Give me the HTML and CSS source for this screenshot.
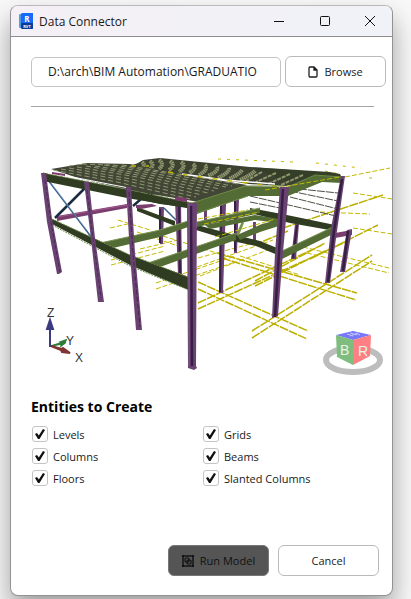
FILE: index.html
```html
<!DOCTYPE html>
<html lang="en">
<head>
<meta charset="utf-8">
<meta name="viewport" content="width=device-width, initial-scale=1">
<title>Data Connector</title>
<link rel="stylesheet" href="styles.css">
</head>
<body>
<main class="window">
  <header class="titlebar">
    <svg class="app-icon" width="15" height="17" viewBox="0 0 15 17" aria-hidden="true">
      <path d="M1 1h3v14H1a1 1 0 0 1-1-1V2a1 1 0 0 1 1-1z" fill="#4f9bea"/>
      <path d="M3 0h11v16H3l-1-1V1z" fill="#176bfa"/>
      <path d="M2 10h12v5l-1 1H3l-1-1z" fill="#0b3c96"/>
      <text x="8" y="9" text-anchor="middle" class="icon-letter">R</text>
      <text x="8" y="15" text-anchor="middle" class="icon-small">RVT</text>
    </svg>
    <h1 class="title">Data Connector</h1>
    <div class="controls">
      <button class="control" aria-label="Minimize"><svg width="10" height="10" viewBox="0 0 10 10"><path d="M0 5.500h10"/></svg></button>
      <button class="control" aria-label="Maximize"><svg width="10" height="10" viewBox="0 0 10 10"><rect x=".5" y=".5" width="9" height="9" rx="1"/></svg></button>
      <button class="control" aria-label="Close"><svg width="10" height="10" viewBox="0 0 10 10"><path d="M0 0l10 10M10 0L0 10"/></svg></button>
    </div>
  </header>

  <div class="content">
    <div class="file-row">
      <input class="path" type="text" aria-label="Model path" value="D:\arch\BIM Automation\GRADUATIO">
      <button class="button browse">
        <svg width="10" height="12" viewBox="0 0 10 12" aria-hidden="true"><path d="M1 2q0-1 1-1h4l3 3v6q0 1-1 1H2q-1 0-1-1zM6 1v3h3" fill="none" stroke="#1c1c1c" stroke-width="1.300"/><path d="M6 1l3 3H6z" fill="#1c1c1c"/></svg>
        Browse
      </button>
    </div>
    <hr class="rule">

    <svg class="model" viewBox="31 107 361 288" role="img" aria-label="Structural model">
      <!-- grid lines behind the frame -->
      <g class="grid-dashed">
        <path d="M345 177L390 168M353 193L392 199M353 228L392 234M303 247L389 268M307 253L389 273M320 212L370 214"/>
        <path d="M218 159L293 162M316 163L361 168M369 178H374M325 171L340 174" stroke-dasharray="3 6"/>
        <path d="M110 228L132 223M118 220L150 230M111 260L165 246M111 265L165 251M156 283L235 256M156 289L235 262M163 236L223 255M137 232L178 246M140 249L178 240M197 267L273 240M200 276L273 248M198 258L250 244M240 256L300 275"/>
      </g>
      <g class="grid-solid">
        <path d="M252 331L372 255M252 338L372 261M198 282L308 331M198 289L307 339M198 303L322 245M198 309L350 240M217 253L357 293M222 258L356 300M255 281L325 243M255 286L325 251"/>
        <path d="M283 228L383 195M310 259L378 225M254 245L288 231"/>
      </g>
      <g stroke="#4d5145" stroke-width="1" stroke-dasharray="8 1">
        <path d="M290 188L338 193M290 191L338 201M250 196L336 216M262 192L280 194M290 197L338 209M250 202L280 208"/>
      </g>

      <!-- rear columns -->
      <g fill="#6a4272">
        <path d="M159 207h5l-1 37h-3zM175 201h6l1 73h-4zM220 204h6l-3 89h-4zM235 199h4l-2 54h-3zM204 209h3v14h-3zM253 222h3v18h-3zM295 224h4l-3 35h-5z"/>
      </g>
      <path d="M160 209v34M179 203l1 70M221 206l-1 86M235 201v50M297 225l-4 33" stroke="#351f42" stroke-width="2"/>

      <!-- beams inside the frame -->
      <path d="M137 207l38 14v5l-38-15zM197 225l38 10 25 6 22 9-2 6-24-10-24-5-36-11zM250 208l32 6 53 11v6l-45-8-40-10z" fill="#303c21"/>
      <g fill="#536b34">
        <path d="M100 243l60-13 28-9v6l-28 10-47 11zM148 263l62-21 26-9v7l-26 9-50 18zM197 222l63-14v5l-63 14zM237 235l25-11 23-6v6l-25 8-20 8zM282 251l53-25v7l-53 26z"/>
        <path d="M242 221l-6 14h3l5-12z" fill="#78924e"/>
        <path d="M205 225l50-10 25 4v4l-25-3-45 9z"/>
      </g>
      <path d="M100 243l60-13 28-9M148 263l62-21 26-9M197 222l63-14M282 251l53-25" fill="none" stroke="#7b9453"/>
      <path d="M204 224l55-12M215 237l60-18M198 219l50-9" class="grid-dashed"/>
      <path d="M57 216l70-12v4l-70 13zM136 205l16-1 5 2-16 3-5-1zM335 233l17-3v5l-17 3z" fill="#7b3d6d"/>
      <path d="M57 217l70-12" stroke="#9f5a8d"/>

      <!-- bracing -->
      <path d="M55 218L85 188M133 206l8-7M147 193l6 1 2-2" fill="none" stroke="#1c2b41" stroke-width="2.500"/>
      <path d="M48 180L92 238M164 208l12 12" stroke="#3a628c" stroke-width="1.500"/>
      <path d="M51 183l35 46" stroke="#8ab0cf" stroke-width=".500"/>

      <!-- lower side beam -->
      <path d="M52 219l78 36 61 23v13l-61-26-78-41z" fill="#303c21"/>
      <path d="M52 219l78 36 61 23M52 225l78 41 61 25" fill="none" stroke="#6d8b47" stroke-dasharray="2 1"/>

      <!-- rear roof slope -->
      <path d="M130 166l8-3 5-3 17-2 90 9 80 5 10 2 2 4-27 2-29 6-37-2-24-4-95-10z" fill="#3c4130"/>
      <path d="M250 167l81 6 9 2v3l-28-2-23 6z" fill="#303c21" opacity=".600"/>
      <g fill="none" stroke="#8f9870" stroke-width="4" stroke-dasharray="1.500 .500">
        <path d="M142 162q4 3 0 6M150 161q5 4 0 8M159 160q6 4 0 9M170 161q6 4-1 9M181 162q6 4-2 10M193 164q5 4-4 9M205 165q4 4-6 10M217 167q2 4-9 9M229 168q1 4-11 10M242 170q-2 4-13 9M255 171q-4 4-15 9"/>
      </g>
      <path d="M262 172l-16 9M276 173l-20 9M290 174l-22 10M303 175l-22 10" stroke="#8f9870" stroke-width="2" stroke-dasharray="4 1"/>

      <!-- front roof slope -->
      <path d="M51 169l36-6 43 1 45 9 72 12-48 17-60-10-58-13z" fill="#424636"/>
      <g fill="none" stroke="#8f9870" stroke-width="1" stroke-dasharray="5 3">
        <path d="M53 170l64 12 73 17M61 169l62 11 73 17M69 168l62 11 71 16M77 167l60 10 71 16M86 166l57 10 71 15M95 166l55 9 70 14M104 165l53 9 69 13M113 165l51 8 68 13M122 165l50 8 66 11M69 166l16-2M82 164l28 1"/>
      </g>
      <path d="M182 174l43 6 50 4" stroke="#fff" stroke-width="1.500" fill="none"/>
      <path d="M168 172l12 2 43 6 15 2 45 5M131 166h18" fill="none" stroke="#c3b800" stroke-width="1.500" stroke-dasharray="5 10"/>

      <!-- eaves -->
      <path d="M43 173l87 17 62 13v5l-32-4-65-14-50-10z" fill="#303c21"/>
      <path d="M46 179l84 17 60 10" stroke="#303c21" stroke-width="5" fill="none"/>
      <path d="M43 173l87 17 62 13" fill="none" stroke="#687e43" stroke-dasharray="2 1"/>
      <path d="M52 172l13 2v2l-13-2zM176 197l11 1v4l-13-2z" fill="#7b3d6d"/>
      <path d="M67 176l62 12" stroke="#fff"/>
      <path d="M192 203l53-17 40 1v9h-37l-51 18zM288 187l27-12 27 2v6l-20-1-34 14z" fill="#536b34"/>
      <path d="M192 203l53-17h40M288 187l27-12 27 2M197 213l51-17" fill="none" stroke="#6d8948"/>
      <path d="M265 190l75-13" class="grid-dashed"/>

      <!-- front columns -->
      <g fill="#6a4272">
        <path d="M41 173h5l6 46 10 53-3 2h-2l-10-52zM84 182h5l6 56 9 64h-6l-7-63zM126 187h5l4 66 7 77h-6l-6-75zM187 203h10l-1 163 1 2-3 2-6-2zM280 187h9l-6 65-5 64-6 2 3-65zM341 176h4l-8 55-7 52h-5l6-55zM347 230l5-1-7 43h-5z"/>
      </g>
      <path d="M45 180l6 42 9 50M87 190l6 48 8 60" fill="none" stroke="#4b2d57" stroke-dasharray="4 2"/>
      <path d="M129 192l4 62 7 73" fill="none" stroke="#45284f" stroke-dasharray="5 2"/>
      <path d="M191 206l1 160M283 189l-4 64-4 64M342 179l-8 52-6 51M348 231l-5 40" fill="none" stroke="#351f42" stroke-width="2.500"/>
      <path d="M189 204v162" stroke="#815989"/>

      <!-- axis triad -->
      <path d="M50 347v-18h-3l3-9 3 9h-3" fill="#3b3b82" stroke="#3b3b82" stroke-width="2"/>
      <path d="M51 346l10-3-1-1 6-2-1 3-4 3v-2z" fill="#2d7d39" stroke="#2d7d39" stroke-width="1.500"/>
      <path d="M51 346l11 3 1-1 7 5-8-1-1-2z" fill="#803434" stroke="#803434" stroke-width="2"/>
      <g class="axis"><text x="47" y="317">Z</text><text x="66" y="345">Y</text><text x="75" y="362">X</text></g>

      <!-- view cube -->
      <ellipse cx="353" cy="360" rx="27" ry="12" fill="none" stroke="#bdbdbd" stroke-width="6"/>
      <path d="M336 335l17-4 18 4-18 5z" fill="#7777fa"/>
      <path d="M336 335l17 5v25l-16-8z" fill="#7fbd7f"/>
      <path d="M353 340l18-5-1 21-17 9z" fill="#ff7f82"/>
      <path d="M347 334l6 2M350 333l7 2M356 333l4 2M350 336l8-3" stroke="#c6c6ff"/>
      <g class="cube"><text x="340" y="355">B</text><text x="358" y="356">R</text></g>
    </svg>

    <fieldset class="entities">
      <legend class="heading">Entities to Create</legend>
      <div class="options">
        <label class="option"><input type="checkbox" checked>Levels</label>
        <label class="option"><input type="checkbox" checked>Grids</label>
        <label class="option"><input type="checkbox" checked>Columns</label>
        <label class="option"><input type="checkbox" checked>Beams</label>
        <label class="option"><input type="checkbox" checked>Floors</label>
        <label class="option"><input type="checkbox" checked>Slanted Columns</label>
      </div>
    </fieldset>

    <footer class="actions">
      <button class="button run">
        <svg width="12" height="12" viewBox="0 0 12 12" aria-hidden="true"><rect x="1" y="1" width="10" height="10" fill="none" stroke="#111" stroke-width="1.400"/><path d="M0 0h2v2H0zM10 0h2v2h-2zM0 10h2v2H0zM10 10h2v2h-2z" fill="#111"/><rect x="3" y="3" width="4" height="4" rx="1" fill="none" stroke="#111" stroke-width="1.200"/><rect x="5" y="5" width="4" height="4" rx="1" fill="none" stroke="#111" stroke-width="1.200"/></svg>
        Run Model
      </button>
      <button class="button">Cancel</button>
    </footer>
  </div>
</main>
</body>
</html>
```
FILE: styles.css
```css
* { box-sizing: border-box; }

body {
  display: flex;
  min-height: 100vh;
  margin: 0;
  padding: 5px 18px 3px 10px;
  background: #f8f8f8;
  font-family: "Open Sans", "Noto Sans", sans-serif;
  font-size: 12px;
  color: #1a1a1a;
  overflow: hidden;
}

button, input { font: inherit; color: inherit; }

.window {
  display: flex;
  flex: 1;
  flex-direction: column;
  min-width: 0;
  border: 1px solid #929294;
  border-top-color: #b9b9bb;
  border-radius: 8px;
  background: #fff;
  box-shadow: 0 14px 26px rgba(0, 0, 0, .36);
  overflow: hidden;
}

.titlebar {
  display: flex;
  align-items: center;
  height: 31px;
  padding-left: 8px;
  border-bottom: 1px solid #8d8d90;
  background: linear-gradient(90deg, #f4f0f5, #f0f2f8);
}

.app-icon { margin-right: 5px; }
.icon-letter { font-size: 8px; font-weight: 700; fill: #fff; }
.icon-small { font-size: 4px; font-weight: 700; fill: #fff; }
.title { flex: 1; margin: 0; font-size: 12px; font-weight: 400; }
.controls { display: flex; }

.control {
  display: grid;
  place-items: center;
  width: 46px;
  height: 30px;
  padding: 0;
  border: 0;
  background: none;
}
.control:last-child { width: 44px; }
.control svg { fill: none; stroke: #111; }

.content {
  display: flex;
  flex: 1;
  flex-direction: column;
  padding: 19px 6px 19px 20px;
}

.file-row { display: flex; align-items: center; gap: 4px; }

.path {
  flex: 1;
  min-width: 0;
  height: 30px;
  padding: 0 16px;
  border: 1px solid #c4c4c4;
  border-radius: 5px;
  background: #fff;
}

.button {
  display: flex;
  align-items: center;
  justify-content: center;
  gap: 6px;
  width: 101px;
  height: 31px;
  padding: 0;
  border: 1px solid #bababa;
  border-radius: 6px;
  background: #fff;
  font-size: 11px;
}

.rule {
  width: auto;
  height: 1px;
  margin: 19px 12px 0 0;
  border: 0;
  background: #a6a6a6;
}

.model { display: block; margin-right: -6px; }
.grid-dashed { fill: none; stroke: #c3b900; stroke-width: 1; stroke-dasharray: 5 2; }
.grid-solid { fill: none; stroke: #bbb000; stroke-width: 1.5; stroke-dasharray: 9 1; }
.axis { font: 12px "Liberation Sans", sans-serif; fill: #333; }
.cube { font: 14px "Liberation Sans", sans-serif; fill: #e9f3e9; }

.entities { min-width: 0; margin: 0; padding: 0; border: 0; }
.heading { padding: 0; font-size: 14px; font-weight: 700; line-height: 24px; color: #000; }
.options { display: grid; grid-template-columns: 171px 1fr; grid-auto-rows: 22px; margin-top: 4px; }
.option { display: flex; align-items: center; gap: 5px; padding-left: 1px; font-size: 11px; }

.option input {
  appearance: none;
  width: 16px;
  height: 16px;
  margin: 0;
  border: 1px solid #c4c4c4;
  border-radius: 3px;
  background: #fff;
}

.option input:checked::before {
  content: "";
  display: block;
  width: 10px;
  height: 10px;
  margin: 2px;
  background: #111;
  clip-path: polygon(0 50%, 20% 40%, 38% 65%, 80% 0, 100% 10%, 45% 100%, 30% 100%);
}

.actions { display: flex; justify-content: flex-end; gap: 9px; margin-top: auto; padding-right: 7px; }
.run { border-color: #777; background: #555; color: #111; }
```
